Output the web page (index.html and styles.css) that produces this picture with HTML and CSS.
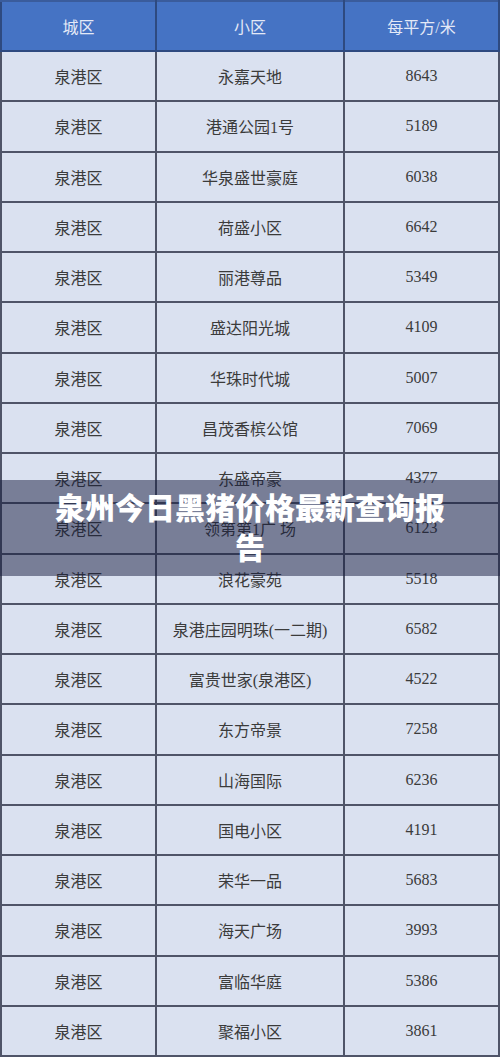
FILE: index.html
```html
<!DOCTYPE html>
<html lang="zh-CN">
<head>
<meta charset="utf-8">
<title>泉州今日黑猪价格最新查询报告</title>
<link rel="stylesheet" href="styles.css">
</head>
<body>
<div class="page">
  <table class="price-table">
    <thead>
      <tr><th class="c1">城区</th><th class="c2">小区</th><th class="c3">每平方/米</th></tr>
    </thead>
    <tbody>
      <tr><td>泉港区</td><td>永嘉天地</td><td class="num">8643</td></tr>
      <tr><td>泉港区</td><td>港通公园1号</td><td class="num">5189</td></tr>
      <tr><td>泉港区</td><td>华泉盛世豪庭</td><td class="num">6038</td></tr>
      <tr><td>泉港区</td><td>荷盛小区</td><td class="num">6642</td></tr>
      <tr><td>泉港区</td><td>丽港尊品</td><td class="num">5349</td></tr>
      <tr><td>泉港区</td><td>盛达阳光城</td><td class="num">4109</td></tr>
      <tr><td>泉港区</td><td>华珠时代城</td><td class="num">5007</td></tr>
      <tr><td>泉港区</td><td>昌茂香槟公馆</td><td class="num">7069</td></tr>
      <tr><td>泉港区</td><td>东盛帝豪</td><td class="num">4377</td></tr>
      <tr><td>泉港区</td><td>领第第1广 场</td><td class="num">6123</td></tr>
      <tr><td>泉港区</td><td>浪花豪苑</td><td class="num">5518</td></tr>
      <tr><td>泉港区</td><td>泉港庄园明珠(一二期)</td><td class="num">6582</td></tr>
      <tr><td>泉港区</td><td>富贵世家(泉港区)</td><td class="num">4522</td></tr>
      <tr><td>泉港区</td><td>东方帝景</td><td class="num">7258</td></tr>
      <tr><td>泉港区</td><td>山海国际</td><td class="num">6236</td></tr>
      <tr><td>泉港区</td><td>国电小区</td><td class="num">4191</td></tr>
      <tr><td>泉港区</td><td>荣华一品</td><td class="num">5683</td></tr>
      <tr><td>泉港区</td><td>海天广场</td><td class="num">3993</td></tr>
      <tr><td>泉港区</td><td>富临华庭</td><td class="num">5386</td></tr>
      <tr><td>泉港区</td><td>聚福小区</td><td class="num">3861</td></tr>
    </tbody>
  </table>
  <div class="banner">
    <h1 class="banner-title">泉州今日黑猪价格最新查询报告</h1>
  </div>
</div>
</body>
</html>
```
FILE: styles.css
```css
html, body {
  margin: 0;
  padding: 0;
  background: #dae1f0;
}
.page {
  position: relative;
  width: 500px;
  height: 1057px;
  overflow: hidden;
}
.price-table {
  width: 500px;
  border-collapse: collapse;
  table-layout: fixed;
  font-family: "Liberation Serif", "Noto Sans CJK SC", serif;
  font-size: 16px;
  color: #3b3b3b;
}
.price-table th,
.price-table td {
  text-align: center;
  vertical-align: middle;
  padding: 0;
  border: 2px solid #4f5468;
}
.price-table thead th {
  height: 48px;
  background: #4573c4;
  color: #e3e9f7;
  font-weight: normal;
  border-color: #2e4a80;
  border-top-color: #3a5c9c;
  border-bottom-color: #2e4a80;
}
.price-table .c1 { width: 153px; }
.price-table .c2 { width: 186px; }
.price-table tbody td {
  height: 48.25px;
  background: #dae1f0;
}
.banner {
  position: absolute;
  left: 0;
  top: 480px;
  width: 500px;
  height: 96px;
  box-sizing: border-box;
  padding: 6px 50px 10px;
  background: rgba(22, 27, 62, 0.5);
}
.banner-title {
  margin: 0;
  text-align: center;
  font-family: "Noto Sans CJK SC", "Noto Sans", sans-serif;
  font-weight: 900;
  font-size: 30px;
  line-height: 40px;
  color: #ffffff;
}
```
